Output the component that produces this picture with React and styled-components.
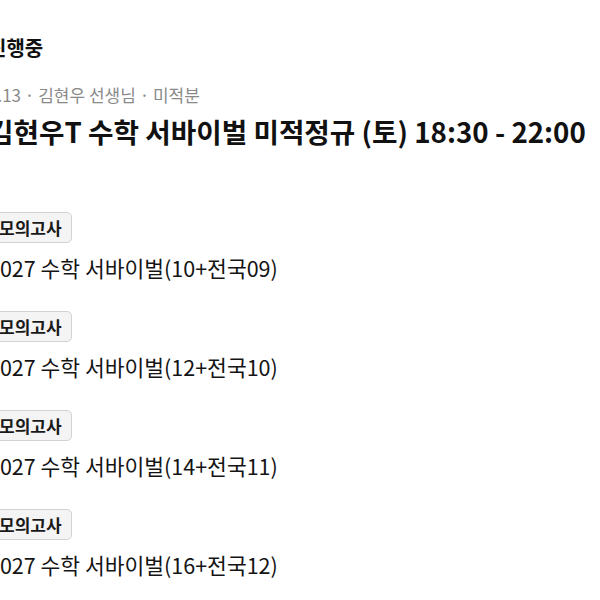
import React from "react";
import styled, { createGlobalStyle } from "styled-components";

const Global = createGlobalStyle`
  html, body { margin: 0; padding: 0; background: #ffffff; }
  body { font-family: "Noto Sans CJK KR", "Noto Sans", sans-serif; color: #111111; overflow: hidden; }
`;

const Page = styled.div`
  width: 600px;
  margin-left: -12px;
  padding-top: 34px;
  display: flex;
  flex-direction: column;
`;

const Status = styled.h2`
  margin: 0;
  font-size: 20px;
  font-weight: 700;
  line-height: 28px;
  color: #111;
`;

const Meta = styled.div`
  margin-top: 22px;
  font-size: 17px;
  line-height: 22px;
  color: #8a8a8a;
  white-space: pre;
`;

const Title = styled.h1`
  margin: 7px 0 0;
  font-size: 27.7px;
  font-weight: 700;
  line-height: 36px;
  color: #111;
  white-space: nowrap;
`;

const List = styled.div`
  margin-top: 63px;
  display: flex;
  flex-direction: column;
  gap: 29px;
`;

const Item = styled.div`
  display: flex;
  flex-direction: column;
  align-items: flex-start;
  gap: 11px;
`;

const Badge = styled.span`
  display: inline-flex;
  align-items: center;
  height: 31px;
  padding: 0 9px 0 10px;
  box-sizing: border-box;
  border: 1px solid #d2d2d2;
  border-radius: 5px;
  background: #f4f4f4;
  font-size: 17px;
  font-weight: 700;
  color: #1a1a1a;
`;

const ItemName = styled.div`
  font-size: 21.5px;
  line-height: 28px;
  color: #141414;
  white-space: nowrap;
`;

const items = [
  "2027 수학 서바이벌(10+전국09)",
  "2027 수학 서바이벌(12+전국10)",
  "2027 수학 서바이벌(14+전국11)",
  "2027 수학 서바이벌(16+전국12)",
];

export default function App() {
  return (
    <>
      <Global />
      <Page>
        <Status>진행중</Status>
        <Meta>{"3.13 · 김현우 선생님 · 미적분"}</Meta>
        <Title>김현우T 수학 서바이벌 미적정규 (토) 18:30 - 22:00</Title>
        <List>
          {items.map((name) => (
            <Item key={name}>
              <Badge>모의고사</Badge>
              <ItemName>{name}</ItemName>
            </Item>
          ))}
        </List>
      </Page>
    </>
  );
}
